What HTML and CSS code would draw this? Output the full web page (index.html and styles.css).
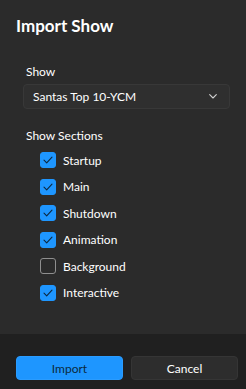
FILE: index.html
```html
<!DOCTYPE html>
<html lang="en">
<head>
    <meta charset="UTF-8">
    <meta name="viewport" content="width=device-width, initial-scale=1.0">
    <title>Import Show</title>
    <link rel="stylesheet" href="styles.css">
</head>
<body>
    <div class="dialog">
        <div class="content">
            <p class="title">Import Show</p>
            <div class="fields">
                <p class="label show-label">Show</p>
                <div class="combo">
                    <span>Santas Top 10-YCM</span>
                    <svg class="chev" width="8" height="5" viewBox="0 0 8 5"><path d="M0.7 0.7 L4 4 L7.3 0.7" fill="none" stroke="#d0d0d0" stroke-width="1.1" stroke-linecap="round" stroke-linejoin="round"/></svg>
                </div>
                <p class="label sections-label">Show Sections</p>
                <div class="checks">
                    <div class="row"><span class="box on"><svg width="10" height="8" viewBox="0 0 10 8"><path d="M1 4.2 L3.7 6.8 L9 1.2" fill="none" stroke="#0b2740" stroke-width="1.1" stroke-linecap="round" stroke-linejoin="round"/></svg></span>Startup</div>
                    <div class="row"><span class="box on"><svg width="10" height="8" viewBox="0 0 10 8"><path d="M1 4.2 L3.7 6.8 L9 1.2" fill="none" stroke="#0b2740" stroke-width="1.1" stroke-linecap="round" stroke-linejoin="round"/></svg></span>Main</div>
                    <div class="row"><span class="box on"><svg width="10" height="8" viewBox="0 0 10 8"><path d="M1 4.2 L3.7 6.8 L9 1.2" fill="none" stroke="#0b2740" stroke-width="1.1" stroke-linecap="round" stroke-linejoin="round"/></svg></span>Shutdown</div>
                    <div class="row"><span class="box on"><svg width="10" height="8" viewBox="0 0 10 8"><path d="M1 4.2 L3.7 6.8 L9 1.2" fill="none" stroke="#0b2740" stroke-width="1.1" stroke-linecap="round" stroke-linejoin="round"/></svg></span>Animation</div>
                    <div class="row"><span class="box"></span>Background</div>
                    <div class="row"><span class="box on"><svg width="10" height="8" viewBox="0 0 10 8"><path d="M1 4.2 L3.7 6.8 L9 1.2" fill="none" stroke="#0b2740" stroke-width="1.1" stroke-linecap="round" stroke-linejoin="round"/></svg></span>Interactive</div>
                </div>
            </div>
        </div>
        <div class="footer">
            <button class="btn primary">Import</button>
            <button class="btn">Cancel</button>
        </div>
    </div>
</body>
</html>
```
FILE: styles.css
```css
body{
    margin: 0;
    background-color: #2b2b2b;
    color: white;
    font-family: Lato, "Noto Sans", sans-serif;
}
p{
    margin: 0;
}
.dialog{
    height: 389px;
    display: flex;
    flex-direction: column;
}
.content{
    flex: 1;
    padding: 14px 16px 0 16px;
}
.title{
    font-size: 17px;
    line-height: 24px;
    font-weight: 700;
}
.fields{
    padding-left: 7px;
}
.label{
    font-size: 12px;
    line-height: 16px;
    padding-left: 3px;
}
.show-label{
    margin-top: 26px;
}
.combo{
    margin-top: 4px;
    height: 23px;
    background-color: #2f2f2f;
    border: 1px solid #383838;
    border-radius: 4px;
    display: flex;
    align-items: center;
    justify-content: space-between;
    padding: 0 12px 0 9px;
    font-size: 12px;
}
.sections-label{
    margin-top: 19px;
}
.checks{
    margin-top: 8px;
    padding-left: 17px;
    display: flex;
    flex-direction: column;
    gap: 10.6px;
}
.row{
    display: flex;
    align-items: center;
    gap: 7px;
    height: 16px;
    font-size: 12px;
}
.box{
    width: 14px;
    height: 14px;
    border: 1px solid #8f8f8f;
    border-radius: 3px;
    display: flex;
    align-items: center;
    justify-content: center;
}
.box.on{
    background-color: #1e96ff;
    border-color: #1e96ff;
}
.footer{
    height: 55px;
    box-sizing: border-box;
    background-color: #202020;
    padding: 22px 8px 0 16px;
    display: grid;
    grid-template-columns: 1fr 1fr;
    gap: 8px;
    align-items: start;
}
.btn{
    height: 24px;
    border: 1px solid #353535;
    border-radius: 4px;
    background-color: #2d2d2d;
    color: white;
    font-family: Lato, "Noto Sans", sans-serif;
    font-size: 12px;
    padding: 0;
}
.primary{
    background-color: #1e96ff;
    border-color: #2a9cff;
    color: #0b2a3d;
}
```
